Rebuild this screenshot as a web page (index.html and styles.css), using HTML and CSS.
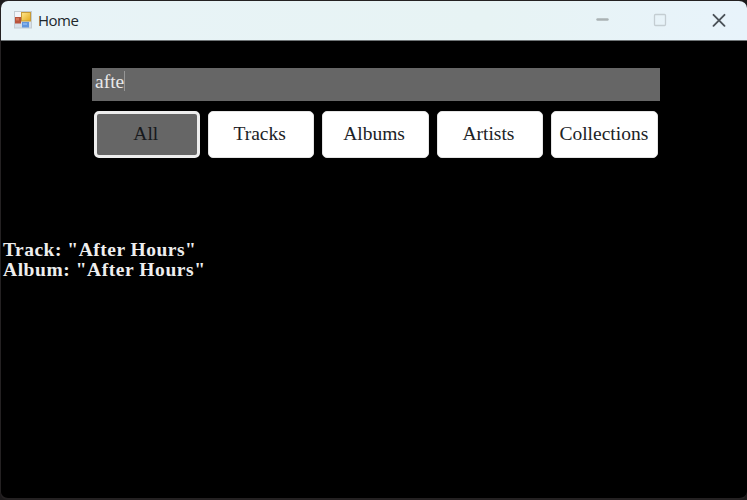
FILE: index.html
```html
<!DOCTYPE html>
<html lang="en">
<head>
<meta charset="utf-8">
<title>Home</title>
<link rel="stylesheet" href="styles.css">
</head>
<body>
<div class="window">
  <header class="titlebar">
    <svg class="app-icon" viewBox="0 0 18 18">
      <defs>
        <linearGradient id="gold" x2="1" y2="1"><stop stop-color="#ffe88f"/><stop offset="1" stop-color="#e3a91d"/></linearGradient>
      </defs>
      <rect x=".5" y=".5" width="17" height="16.5" fill="#d7dfe8" stroke="#c3ccd2"/>
      <rect x="1" y="1" width="6" height="5" fill="#f4f6fa"/>
      <rect x="1" y="6" width="6" height="6.5" fill="#b9533b"/>
      <rect x="2" y="7" width="3" height="2.5" fill="#d67659"/>
      <rect x="8" y="11" width="7" height="5.5" fill="#6295dc"/>
      <rect x="9" y="12" width="4" height="2" fill="#83b1ed"/>
      <rect x="7.5" y="1.5" width="9" height="8.5" fill="url(#gold)" stroke="#c79b37"/>
    </svg>
    <h1 class="title">Home</h1>
    <div class="controls">
      <svg class="control" viewBox="0 0 16 16"><path d="M2.5 7.5h10" stroke="#aab2b4" stroke-width="2.4" stroke-linecap="round"/></svg>
      <svg class="control" viewBox="0 0 16 16"><rect x="1.5" y="2.5" width="11" height="11" rx="1" fill="none" stroke="#c4cdd2" stroke-width="1.3"/></svg>
      <svg class="control" viewBox="0 0 16 16"><path d="M2.5 2.8l11 11m0-11l-11 11" stroke="#4b5158" stroke-width="1.9" stroke-linecap="round"/></svg>
    </div>
  </header>
  <main class="content">
    <div class="search"><span class="query">afte</span><span class="caret"></span></div>
    <nav class="filters">
      <button class="filter active">All</button>
      <button class="filter">Tracks</button>
      <button class="filter">Albums</button>
      <button class="filter">Artists</button>
      <button class="filter wide">Collections</button>
    </nav>
    <div class="results">
      <p class="result">Track: "After Hours"</p>
      <p class="result album">Album: "After Hours"</p>
    </div>
  </main>
</div>
</body>
</html>
```
FILE: styles.css
```css
* { box-sizing: border-box; }
body { margin: 0; background: #1c1a1b; overflow: hidden; }
.window {
  width: 747px; height: 500px;
  display: flex; flex-direction: column;
  border: 1px solid #242122; border-bottom-width: 2px; border-right-width: 0;
  border-radius: 8px; overflow: hidden; background: #000;
}
.titlebar {
  height: 40px; flex: none;
  display: flex; align-items: center;
  padding: 0 20px 1px 13px;
  background: linear-gradient(90deg, #e8f3f7, #e7f3f4 65%, #e8f3fb);
  border-bottom: 1px solid #6f7476;
}
.app-icon { width: 18px; height: 18px; }
.title {
  margin: 0 0 0 6px;
  font: 400 15px/20px "Open Sans", "Noto Sans", sans-serif;
  letter-spacing: -0.5px; color: #20272b;
}
.controls { display: flex; gap: 42px; margin-left: auto; }
.control { width: 16px; height: 16px; fill: none; }
.content { padding-top: 27px; font-family: "Liberation Serif", serif; }
.search {
  width: 568px; height: 33px; margin-left: 91px; padding: 3px 0 0 3px;
  display: flex; background: #666; color: #e9e9e9;
  font-size: 19.5px; line-height: 21px;
}
.caret { width: 1px; height: 20px; background: #969696; }
.filters { display: flex; gap: 8px; margin: 10px 0 0 92.6px; }
.filter {
  width: 106.4px; height: 47px; padding: 0 3px 2px 0;
  border: 1px solid #e4e4e4; border-radius: 5px;
  background: #fff; color: #202226;
  font: 19.5px/22px "Liberation Serif", serif;
}
.filter.wide { padding-right: 1px; }
.filter.active { background: #666; border: 3px solid #eee; color: #17191c; padding-right: 2px; }
.results { margin: 82px 0 0 2px; color: #eee; font-size: 19.5px; font-weight: 700; line-height: 20px; }
.result { margin: 0; letter-spacing: 0.5px; }
.album { letter-spacing: 0.56px; }
```
